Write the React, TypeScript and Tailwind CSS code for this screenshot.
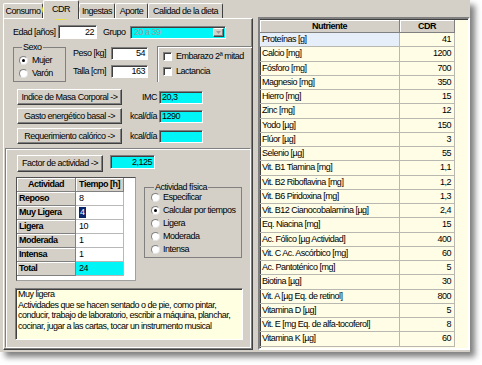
import React from "react";

// Win9x style bevels
const raised =
  "bg-[#d4d0c8] border border-t-white border-l-white border-r-[#404040] border-b-[#404040] shadow-[inset_-1px_-1px_0_#808080]";
const sunken =
  "border border-t-[#808080] border-l-[#808080] border-r-white border-b-white shadow-[inset_1px_1px_0_#404040]";
const cell3d =
  "bg-[#d4d0c8] border-r border-b border-r-[#808080] border-b-[#808080] shadow-[inset_1px_1px_0_#ffffff]";

const tabs = [
  { label: "Consumo", w: "w-[40px]" },
  { label: "CDR", w: "w-[36px]", active: true },
  { label: "Ingestas", w: "w-[36px]" },
  { label: "Aporte", w: "w-[33px]" },
  { label: "Calidad de la dieta", w: "w-[75px]" },
];

const nutrientes: [string, string][] = [
  ["Proteínas [g]", "41"],
  ["Calcio [mg]", "1200"],
  ["Fósforo [mg]", "700"],
  ["Magnesio [mg]", "350"],
  ["Hierro [mg]", "15"],
  ["Zinc [mg]", "12"],
  ["Yodo [µg]", "150"],
  ["Flúor [µg]", "3"],
  ["Selenio [µg]", "55"],
  ["Vit. B1 Tiamina [mg]", "1,1"],
  ["Vit. B2 Riboflavina [mg]", "1,2"],
  ["Vit. B6 Piridoxina [mg]", "1,3"],
  ["Vit. B12 Cianocobalamina [µg]", "2,4"],
  ["Eq. Niacina [mg]", "15"],
  ["Ac. Fólico [µg Actividad]", "400"],
  ["Vit. C Ac. Ascórbico [mg]", "60"],
  ["Ac. Pantoténico [mg]", "5"],
  ["Biotina [µg]", "30"],
  ["Vit. A [µg Eq. de retinol]", "800"],
  ["Vitamina D [µg]", "5"],
  ["Vit. E [mg Eq. de alfa-tocoferol]", "8"],
  ["Vitamina K [µg]", "60"],
];

const actividades: [string, string][] = [
  ["Reposo", "8"],
  ["Muy Ligera", "4"],
  ["Ligera", "10"],
  ["Moderada", "1"],
  ["Intensa", "1"],
];

const Radio = ({ checked }: { checked?: boolean }) => (
  <span className="w-[9px] h-[9px] rounded-full bg-white border border-t-[#808080] border-l-[#808080] border-r-[#e4e4e4] border-b-[#e4e4e4] flex items-center justify-center shrink-0">
    {checked && <span className="w-[3px] h-[3px] rounded-full bg-black" />}
  </span>
);

const Check = () => (
  <span className={`w-[9px] h-[9px] bg-white shrink-0 ${sunken}`} />
);

const Btn = ({ w, h, children }: { w: string; h: string; children: React.ReactNode }) => (
  <div className={`${w} ${h} ${raised} flex items-center justify-center shrink-0 whitespace-nowrap`}>
    {children}
  </div>
);

const CyanBox = ({ w, h, right, children }: { w: string; h: string; right?: boolean; children?: React.ReactNode }) => (
  <div
    className={`${w} ${h} bg-[#00f6f6] ${sunken} flex items-center shrink-0 ${
      right ? "justify-end pr-[2px]" : "pl-[2px]"
    }`}
  >
    {children}
  </div>
);

export default function App() {
  return (
    <div className="w-[482px] h-[365px] bg-white font-['Liberation_Sans',Arial,sans-serif] text-[9px] leading-[11px] tracking-[-0.5px] text-black overflow-hidden">
      <div className="relative w-[470px] h-[352px] bg-[#d4d0c8] flex shadow-[5px_5px_6px_rgba(0,0,0,0.5)]">
        {/* left: tab control */}
        <div className="w-[253px] pl-[3px] flex flex-col">
          <div className="flex items-end h-[18px]">
            {tabs.map((t) => (
              <div
                key={t.label}
                className={`${t.w} flex items-center justify-center whitespace-nowrap border-t border-l border-r border-t-white border-l-white border-r-[#404040] rounded-t-[2px] ${
                  t.active ? "h-[19px] -mb-px relative z-10 bg-[#d4d0c8] pb-[2px]" : "h-[15px]"
                }`}
              >
                {t.label}
              </div>
            ))}
          </div>

          <div className="w-[250px] h-[332px] border border-t-white border-l-white border-r-[#404040] border-b-[#404040] shadow-[inset_-1px_-1px_0_#808080] flex flex-col">
            {/* datos personales */}
            <div className="pl-[9px] pt-[6px]">
              <div className="flex items-center h-[14px]">
                <span className="w-[45px] whitespace-nowrap">Edad [años]</span>
                <div className={`w-[39px] h-[14px] bg-white ${sunken} flex items-center justify-end pr-[2px]`}>22</div>
                <span className="ml-[6px] w-[25px]">Grupo</span>
                <div className={`ml-[2px] w-[96px] h-[13px] bg-[#00f6f6] ${sunken} flex items-center`}>
                  <span className="pl-[3px] flex-1 text-[#9c9c9c]">20 a 39</span>
                  <div className={`w-[11px] h-[9px] mr-[1px] ${raised} flex items-center justify-center`}>
                    <svg width="5" height="3" viewBox="0 0 5 3">
                      <path d="M0 0h5L2.5 3z" fill="#9a9a9a" />
                    </svg>
                  </div>
                </div>
              </div>

              <div className="flex items-start mt-[4px]">
                <fieldset className="w-[53px] h-[39px] border border-[#808080] pl-[5px]">
                  <legend className="ml-[3px] px-[1px] leading-[9px]">Sexo</legend>
                  <div className="pt-[2px]">
                    <div className="flex items-center h-[13px]">
                      <Radio checked />
                      <span className="ml-[4px]">Mujer</span>
                    </div>
                    <div className="flex items-center h-[13px]">
                      <Radio />
                      <span className="ml-[4px]">Varón</span>
                    </div>
                  </div>
                </fieldset>

                <div className="ml-[7px] pt-[4px] flex flex-col gap-[5px]">
                  <div className="flex items-center h-[13px]">
                    <span className="w-[38px] whitespace-nowrap">Peso [kg]</span>
                    <div className={`w-[37px] h-[13px] bg-white ${sunken} flex items-center justify-end pr-[2px]`}>54</div>
                  </div>
                  <div className="flex items-center h-[13px]">
                    <span className="w-[38px] whitespace-nowrap">Talla [cm]</span>
                    <div className={`w-[37px] h-[13px] bg-white ${sunken} flex items-center justify-end pr-[2px]`}>163</div>
                  </div>
                </div>

                <div className="ml-[9px] mt-[3px] w-[95px] h-[36px] border-t border-l border-[#808080] shadow-[inset_1px_1px_0_#ffffff] pl-[5px] pt-[4px] flex flex-col gap-[5px]">
                  <div className="flex items-center h-[10px]">
                    <Check />
                    <span className="ml-[4px] whitespace-nowrap">Embarazo 2ª mitad</span>
                  </div>
                  <div className="flex items-center h-[10px]">
                    <Check />
                    <span className="ml-[4px]">Lactancia</span>
                  </div>
                </div>
              </div>
            </div>

            {/* calculos */}
            <div className="pl-[13px] mt-[7px] flex flex-col">
              <div className="flex items-center">
                <Btn w="w-[105px]" h="h-[16px]">Indice de Masa Corporal -&gt;</Btn>
                <span className="w-[36px] text-right pr-[1px]">IMC</span>
                <span className="ml-[1px]">
                  <CyanBox w="w-[44px]" h="h-[13px]">20,3</CyanBox>
                </span>
              </div>
              <div className="flex items-center mt-[3px]">
                <Btn w="w-[105px]" h="h-[16px]">Gasto energético basal -&gt;</Btn>
                <span className="w-[36px] text-right pr-[1px]">kcal/día</span>
                <span className="ml-[1px]">
                  <CyanBox w="w-[44px]" h="h-[13px]">1290</CyanBox>
                </span>
              </div>
              <div className="flex items-center mt-[4px]">
                <Btn w="w-[105px]" h="h-[16px]">Requerimiento calórico -&gt;</Btn>
                <span className="w-[36px] text-right pr-[1px]">kcal/día</span>
                <span className="ml-[1px]">
                  <CyanBox w="w-[44px]" h="h-[13px]" />
                </span>
              </div>
            </div>

            {/* actividad */}
            <div className="mt-[4px] ml-[1px] mb-[1px] w-[246px] flex-1 border border-t-[#808080] border-l-[#808080] border-b-white border-r-white shadow-[inset_1px_1px_0_#ffffff] flex flex-col">
              <div className="ml-[11px] mt-[6px] flex items-start">
                <Btn w="w-[86px]" h="h-[17px]">Factor de actividad -&gt;</Btn>
                <span className="ml-[7px]">
                  <CyanBox w="w-[45px]" h="h-[14px]" right>
                    2,125
                  </CyanBox>
                </span>
              </div>

              <div className="ml-[10px] mt-[5px] flex items-start">
                <div className="w-[120px] h-[104px] border border-t-[#505050] border-l-[#505050] border-r-[#a0a0a0] border-b-[#a0a0a0] bg-white">
                  <div className="flex h-[14px] font-bold">
                    <div className={`w-[59px] ${cell3d} flex items-center justify-center`}>Actividad</div>
                    <div className={`w-[48px] ${cell3d} flex items-center justify-center whitespace-nowrap`}>Tiempo [h]</div>
                  </div>
                  {actividades.map(([a, v]) => (
                    <div key={a} className="flex h-[14px]">
                      <div className={`w-[59px] ${cell3d} flex items-center pl-[2px] font-bold whitespace-nowrap`}>{a}</div>
                      <div className="w-[48px] border-r border-b border-[#b8b8b8] flex items-center pl-[3px]">
                        {a === "Muy Ligera" ? <span className="bg-[#0a246a] text-white px-[1px]">{v}</span> : v}
                      </div>
                    </div>
                  ))}
                  <div className="flex h-[14px]">
                    <div className={`w-[59px] ${cell3d} flex items-center pl-[2px] font-bold`}>Total</div>
                    <div className="w-[48px] bg-[#00f6f6] border-r border-b border-[#b8b8b8] flex items-center pl-[3px]">24</div>
                  </div>
                </div>

                <fieldset className="ml-[8px] mt-[6px] w-[98px] h-[75px] border border-[#808080] pl-[6px]">
                  <legend className="ml-[3px] px-[1px] leading-[9px] whitespace-nowrap">Actividad física</legend>
                  <div className="-mt-[1px]">
                    {[
                      ["Especificar", false],
                      ["Calcular por tiempos", true],
                      ["Ligera", false],
                      ["Moderada", false],
                      ["Intensa", false],
                    ].map(([l, c]) => (
                      <div key={l as string} className="flex items-center h-[13px]">
                        <Radio checked={c as boolean} />
                        <span className="ml-[3px] whitespace-nowrap">{l as string}</span>
                      </div>
                    ))}
                  </div>
                </fieldset>
              </div>

              <div className={`ml-[9px] mt-[7px] w-[228px] h-[52px] bg-[#ffffe1] ${sunken} px-[2px] leading-[10.7px] whitespace-nowrap`}>
                Muy ligera
                <br />
                Actividades que se hacen sentado o de pie, como pintar,
                <br />
                conducir, trabajo de laboratorio, escribir a máquina, planchar,
                <br />
                cocinar, jugar a las cartas, tocar un instrumento musical
              </div>
            </div>
          </div>
        </div>

        {/* right: tabla de nutrientes */}
        <div className="ml-[5px] pt-[17px]">
          <div className="w-[212px] h-[333px] border-2 border-t-[#808080] border-l-[#808080] border-r-white border-b-white shadow-[inset_1px_1px_0_#404040] bg-[#fffde6] pt-[1px]">
            <div className="flex h-[13px] font-bold">
              <div className={`w-[140px] ${cell3d} flex items-center justify-center`}>Nutriente</div>
              <div className={`w-[55px] ${cell3d} flex items-center justify-center`}>CDR</div>
            </div>
            {nutrientes.map(([n, v], i) => (
              <div key={n} className="flex h-[14.25px]">
                <div
                  className={`w-[140px] border-r border-b border-[#b8b8b0] flex items-center pl-[2px] whitespace-nowrap ${
                    i === 0 ? "bg-[#e6eff9]" : ""
                  }`}
                >
                  {n}
                </div>
                <div className="w-[55px] border-r border-b border-[#b8b8b0] flex items-center justify-end pr-[3px]">{v}</div>
              </div>
            ))}
          </div>
        </div>

        {/* highlight ring around active tab */}
        <svg className="absolute left-[41px] -top-[1px] pointer-events-none" width="40" height="22" viewBox="0 0 40 22">
          <ellipse cx="20" cy="10.5" rx="18" ry="9.5" fill="none" stroke="#ece33a" strokeWidth="2" />
        </svg>
      </div>
    </div>
  );
}
